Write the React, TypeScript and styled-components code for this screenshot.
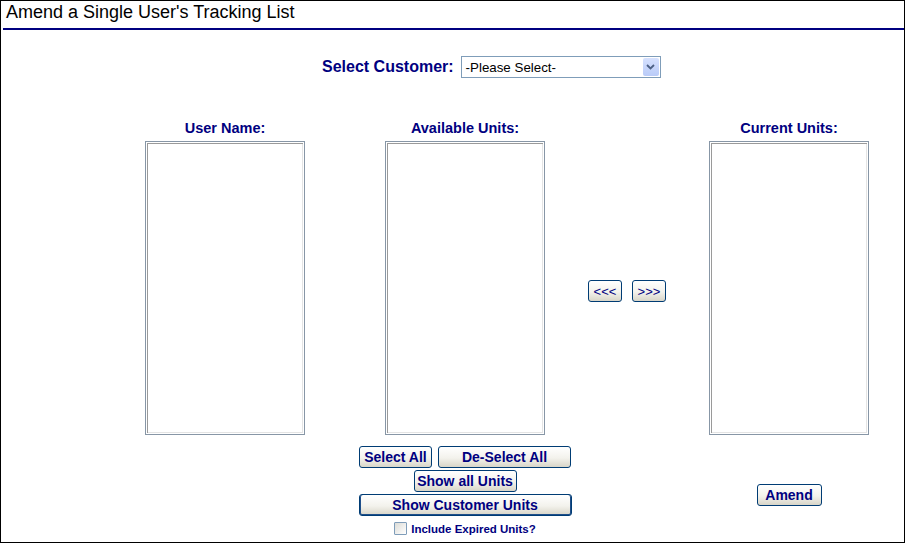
import styled, { createGlobalStyle } from 'styled-components'

const GlobalStyle = createGlobalStyle`
  html, body {
    margin: 0;
    padding: 0;
    background: #fff;
  }
  * {
    box-sizing: border-box;
  }
`

const Frame = styled.div`
  width: 905px;
  height: 543px;
  border: 1px solid #000;
  font-family: "Liberation Sans", Arial, sans-serif;
  background: #fff;
  overflow: hidden;
`

const Header = styled.div`
  margin-left: 2px;
  padding: 1px 0 5px 3px;
  border-bottom: 2px solid #000080;
  font-size: 18px;
  line-height: 21px;
  color: #000;
`

const CustomerRow = styled.div`
  display: flex;
  align-items: center;
  gap: 7px;
  margin-top: 26px;
  padding-left: 321px;
  height: 22px;
`

const CustomerLabel = styled.span`
  font-size: 16px;
  font-weight: bold;
  color: #000080;
`

const SelectBox = styled.div`
  display: flex;
  align-items: center;
  justify-content: space-between;
  width: 200px;
  height: 22px;
  padding: 1px 1px 1px 4px;
  border: 1px solid #7f9db9;
  font-size: 13.33px;
  color: #000;
`

const SelectArrow = styled.span`
  display: flex;
  align-items: center;
  justify-content: center;
  width: 16px;
  height: 100%;
  border-radius: 2px;
  background: linear-gradient(#d6e1fe, #b9cbf8);
`

const Board = styled.div`
  display: grid;
  grid-template-columns: 160px 80px 160px 164px 160px;
  grid-template-rows: 17px 298px 100px;
  margin-top: 42px;
  padding-left: 144px;
`

const ColLabel = styled.div<{ $col: number }>`
  grid-column: ${p => p.$col};
  grid-row: 1;
  text-align: center;
  font-size: 14.5px;
  line-height: 17px;
  font-weight: bold;
  color: #000080;
`

const ListBox = styled.div<{ $col: number }>`
  grid-column: ${p => p.$col};
  grid-row: 2;
  margin-top: 4px;
  height: 294px;
  border: 1px solid #8796a6;
  background: #fff;
  box-shadow: inset 0 0 0 1px #fff, inset 1px 1px 0 1px #9a9a9a, inset -1px -1px 0 1px #e4e4e4;
`

const Transfer = styled.div`
  grid-column: 4;
  grid-row: 2;
  display: flex;
  align-items: center;
  justify-content: center;
  gap: 10px;
  padding-top: 10px;
`

const Controls = styled.div`
  grid-column: 3;
  grid-row: 3;
  margin-top: 11px;
  display: flex;
  flex-direction: column;
  align-items: center;
  gap: 2px;
`

const ButtonRow = styled.div`
  display: flex;
  gap: 6px;
  white-space: nowrap;
`

const Button = styled.button<{ $width: number; $main?: boolean; $small?: boolean }>`
  width: ${p => p.$width}px;
  height: 22px;
  padding: 0;
  flex: none;
  border: 1px solid #003c74;
  border-radius: 3px;
  background: linear-gradient(#ffffff, #f3f2ec 55%, #d8d5c8);
  font-family: "Liberation Sans", Arial, sans-serif;
  font-size: ${p => (p.$small ? '13px' : '14px')};
  font-weight: ${p => (p.$small ? 'normal' : 'bold')};
  color: #000080;
  white-space: nowrap;
  box-shadow: ${p => (p.$main ? 'inset 1px 0 0 #1f4f8a, inset -1px 0 0 #1f4f8a, inset 0 -1px 0 #1f4f8a' : 'none')};
  cursor: pointer;
`

const ExpiredRow = styled.label`
  display: flex;
  align-items: center;
  gap: 4px;
  margin-top: 4px;
  font-size: 11.5px;
  font-weight: bold;
  color: #000080;
  white-space: nowrap;
`

const CheckBox = styled.span`
  width: 13px;
  height: 13px;
  border: 1px solid #7f9db9;
  border-radius: 1px;
  background: linear-gradient(135deg, #dcdcd7, #fff);
`

const AmendCell = styled.div`
  grid-column: 5;
  grid-row: 3;
  display: flex;
  align-items: center;
  justify-content: center;
  padding-top: 20px;
`

const Chevron = () => (
  <svg width="9" height="6" viewBox="0 0 9 6">
    <path d="M1 1 L4.5 4.5 L8 1" fill="none" stroke="#4d6185" strokeWidth="1.8" />
  </svg>
)

const App = () => {
  return (
    <Frame>
      <GlobalStyle />
      <Header>Amend a Single User's Tracking List</Header>

      <CustomerRow>
        <CustomerLabel>Select Customer:</CustomerLabel>
        <SelectBox>
          <span>-Please Select-</span>
          <SelectArrow><Chevron /></SelectArrow>
        </SelectBox>
      </CustomerRow>

      <Board>
        <ColLabel $col={1}>User Name:</ColLabel>
        <ColLabel $col={3}>Available Units:</ColLabel>
        <ColLabel $col={5}>Current Units:</ColLabel>

        <ListBox $col={1} />
        <ListBox $col={3} />
        <Transfer>
          <Button $width={34} $small>&lt;&lt;&lt;</Button>
          <Button $width={34} $small>&gt;&gt;&gt;</Button>
        </Transfer>
        <ListBox $col={5} />

        <Controls>
          <ButtonRow>
            <Button $width={73}>Select All</Button>
            <Button $width={133}>De-Select All</Button>
          </ButtonRow>
          <Button $width={103}>Show all Units</Button>
          <Button $width={213} $main>Show Customer Units</Button>
          <ExpiredRow>
            <CheckBox />
            Include Expired Units?
          </ExpiredRow>
        </Controls>

        <AmendCell>
          <Button $width={65}>Amend</Button>
        </AmendCell>
      </Board>
    </Frame>
  )
}

export default App
